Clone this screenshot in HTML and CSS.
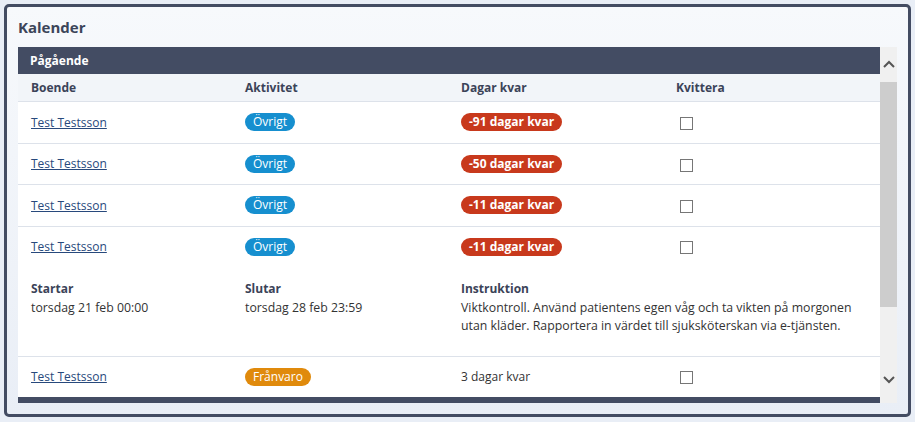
FILE: index.html
```html
<!DOCTYPE html>
<html lang="sv">
	<head>
		<meta charset="UTF-8">
		<title>Kalender</title>
		<link rel="stylesheet" href="styles.css">
	</head>
	<body>
		<div class="panel">
			<h2 class="panel-title">Kalender</h2>
			<div class="scroll-box">
				<div class="scroll-content">
					<div class="section-head">Pågående</div>
					<div class="row head-row">
						<span>Boende</span>
						<span>Aktivitet</span>
						<span>Dagar kvar</span>
						<span>Kvittera</span>
					</div>
					<div class="row">
						<a href="#">Test Testsson</a>
						<span><span class="badge blue">Övrigt</span></span>
						<span><span class="badge red">-91 dagar kvar</span></span>
						<span><span class="check"></span></span>
					</div>
					<div class="row">
						<a href="#">Test Testsson</a>
						<span><span class="badge blue">Övrigt</span></span>
						<span><span class="badge red">-50 dagar kvar</span></span>
						<span><span class="check"></span></span>
					</div>
					<div class="row">
						<a href="#">Test Testsson</a>
						<span><span class="badge blue">Övrigt</span></span>
						<span><span class="badge red">-11 dagar kvar</span></span>
						<span><span class="check"></span></span>
					</div>
					<div class="row open">
						<a href="#">Test Testsson</a>
						<span><span class="badge blue">Övrigt</span></span>
						<span><span class="badge red">-11 dagar kvar</span></span>
						<span><span class="check"></span></span>
					</div>
					<div class="details">
						<div>
							<b>Startar</b>
							<p>torsdag 21 feb 00:00</p>
						</div>
						<div>
							<b>Slutar</b>
							<p>torsdag 28 feb 23:59</p>
						</div>
						<div class="wide">
							<b>Instruktion</b>
							<p>Viktkontroll. Använd patientens egen våg och ta vikten på morgonen utan kläder. Rapportera in värdet till sjuksköterskan via e-tjänsten.</p>
						</div>
					</div>
					<div class="row last">
						<a href="#">Test Testsson</a>
						<span><span class="badge orange">Frånvaro</span></span>
						<span>3 dagar kvar</span>
						<span><span class="check"></span></span>
					</div>
					<div class="section-head"></div>
				</div>
				<div class="scrollbar">
					<svg class="arrow up" width="12" height="8" viewBox="0 0 12 8"><path d="M1 7 L6 2 L11 7" fill="none" stroke="#555" stroke-width="2"/></svg>
					<div class="track"><div class="thumb"></div></div>
					<svg class="arrow down" width="12" height="8" viewBox="0 0 12 8"><path d="M1 1 L6 6 L11 1" fill="none" stroke="#555" stroke-width="2"/></svg>
				</div>
			</div>
		</div>
	</body>
</html>
```

FILE: styles.css
```css
* {
	box-sizing: border-box;
	font-family: "Open Sans", "Noto Sans", sans-serif;
}
body {
	margin: 0;
	padding: 4px;
	background-color: #e9eef6;
	color: #333;
	font-size: 12px;
}
div.panel {
	height: 413px;
	border: 3px solid #434c62;
	border-radius: 5px;
	background: linear-gradient(#f7f9fc, #e9eef6);
	padding: 0 11px 10px 11px;
}
h2.panel-title {
	margin: 0;
	height: 40px;
	padding-top: 10px;
	font-size: 15px;
	font-weight: bold;
	color: #3c4559;
}
div.scroll-box {
	display: flex;
	height: 356px;
	overflow: hidden;
}
div.scroll-content {
	flex: 1;
	background-color: #fff;
	overflow: hidden;
}
div.section-head {
	height: 27px;
	background-color: #434c63;
	color: #fff;
	font-weight: bold;
	padding: 5px 12px;
}
div.row {
	display: grid;
	grid-template-columns: 214px 216px 215px 1fr;
	align-items: center;
	height: 41.5px;
	padding-left: 13px;
	border-bottom: 1px solid #dde2ea;
}
div.row.open {
	border-bottom: none;
	height: 40px;
}
div.row.last {
	border-bottom: none;
	height: 40px;
}
div.head-row {
	height: 28px;
	background-color: #f2f5f9;
	font-weight: bold;
	color: #3b4358;
}
div.row a {
	color: #28497c;
	text-decoration: underline;
}
span.badge {
	display: inline-block;
	color: #fff;
	border-radius: 9px;
	padding: 0 8px;
	line-height: 18px;
}
span.badge.blue {
	background-color: #168fcf;
}
span.badge.red {
	background-color: #c8391c;
	font-weight: bold;
}
span.badge.orange {
	background-color: #e08a0c;
}
span.check {
	display: inline-block;
	width: 13px;
	height: 13px;
	margin-left: 4px;
	border: 1px solid #767676;
	vertical-align: middle;
}
div.details {
	display: grid;
	grid-template-columns: 214px 216px 1fr;
	padding: 13px 13px 0 13px;
	height: 90px;
	border-bottom: 1px solid #dde2ea;
	line-height: 18px;
}
div.details b {
	color: #3b4358;
}
div.details p {
	margin: 1px 0 0 0;
	font-size: 12.3px;
}
div.scrollbar {
	width: 17px;
	background-color: #f0f0f0;
	display: flex;
	flex-direction: column;
	align-items: center;
}
svg.arrow.up {
	margin: 13px 0 8px 0;
}
svg.arrow.down {
	margin: 8px 0 19px 0;
}
div.track {
	flex: 1;
	width: 100%;
}
div.thumb {
	margin-top: 6px;
	height: 225px;
	background-color: #cdcdcd;
}
```
